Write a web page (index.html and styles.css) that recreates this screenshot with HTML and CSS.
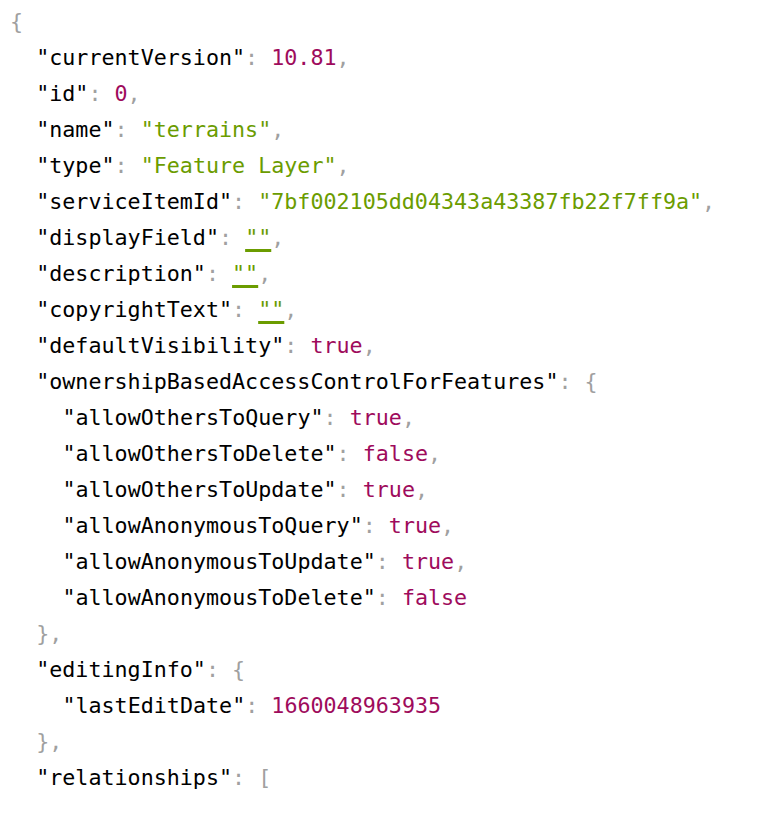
FILE: index.html
```html
<!DOCTYPE html>
<html>
<head>
<meta charset="utf-8">
<link rel="stylesheet" href="styles.css">
</head>
<body>
<div class="json">
<div class="line"><span class="p">{</span></div>
<div class="line i1"><span class="k">"currentVersion"</span><span class="p">: </span><span class="n">10.81</span><span class="p">,</span></div>
<div class="line i1"><span class="k">"id"</span><span class="p">: </span><span class="n">0</span><span class="p">,</span></div>
<div class="line i1"><span class="k">"name"</span><span class="p">: </span><span class="s">"terrains"</span><span class="p">,</span></div>
<div class="line i1"><span class="k">"type"</span><span class="p">: </span><span class="s">"Feature Layer"</span><span class="p">,</span></div>
<div class="line i1"><span class="k">"serviceItemId"</span><span class="p">: </span><span class="s">"7bf002105dd04343a43387fb22f7ff9a"</span><span class="p">,</span></div>
<div class="line i1"><span class="k">"displayField"</span><span class="p">: </span><span class="s empty">""</span><span class="p">,</span></div>
<div class="line i1"><span class="k">"description"</span><span class="p">: </span><span class="s empty">""</span><span class="p">,</span></div>
<div class="line i1"><span class="k">"copyrightText"</span><span class="p">: </span><span class="s empty">""</span><span class="p">,</span></div>
<div class="line i1"><span class="k">"defaultVisibility"</span><span class="p">: </span><span class="n">true</span><span class="p">,</span></div>
<div class="line i1"><span class="k">"ownershipBasedAccessControlForFeatures"</span><span class="p">: {</span></div>
<div class="line i2"><span class="k">"allowOthersToQuery"</span><span class="p">: </span><span class="n">true</span><span class="p">,</span></div>
<div class="line i2"><span class="k">"allowOthersToDelete"</span><span class="p">: </span><span class="n">false</span><span class="p">,</span></div>
<div class="line i2"><span class="k">"allowOthersToUpdate"</span><span class="p">: </span><span class="n">true</span><span class="p">,</span></div>
<div class="line i2"><span class="k">"allowAnonymousToQuery"</span><span class="p">: </span><span class="n">true</span><span class="p">,</span></div>
<div class="line i2"><span class="k">"allowAnonymousToUpdate"</span><span class="p">: </span><span class="n">true</span><span class="p">,</span></div>
<div class="line i2"><span class="k">"allowAnonymousToDelete"</span><span class="p">: </span><span class="n">false</span></div>
<div class="line i1"><span class="p">},</span></div>
<div class="line i1"><span class="k">"editingInfo"</span><span class="p">: {</span></div>
<div class="line i2"><span class="k">"lastEditDate"</span><span class="p">: </span><span class="n">1660048963935</span></div>
<div class="line i1"><span class="p">},</span></div>
<div class="line i1"><span class="k">"relationships"</span><span class="p">: [</span></div>
</div>
</body>
</html>
```
FILE: styles.css
```css
html, body {
  margin: 0;
  padding: 0;
  background: #ffffff;
}
.json {
  padding: 4px 0 0 10px;
  font-family: "DejaVu Sans Mono", "Liberation Mono", monospace;
  font-size: 21.7px;
  color: #000000;
}
.line {
  height: 36px;
  line-height: 36px;
  white-space: pre;
}
.i1 { padding-left: 26.2px; }
.i2 { padding-left: 52.4px; }
.k { color: #000000; }
.p { color: #a0a0a0; }
.n { color: #9e0b5c; }
.s { color: #6b9c00; }
.empty {
  text-decoration: underline;
  text-decoration-color: #6b9c00;
  text-decoration-thickness: 3px;
  text-underline-offset: 4px;
}
```
